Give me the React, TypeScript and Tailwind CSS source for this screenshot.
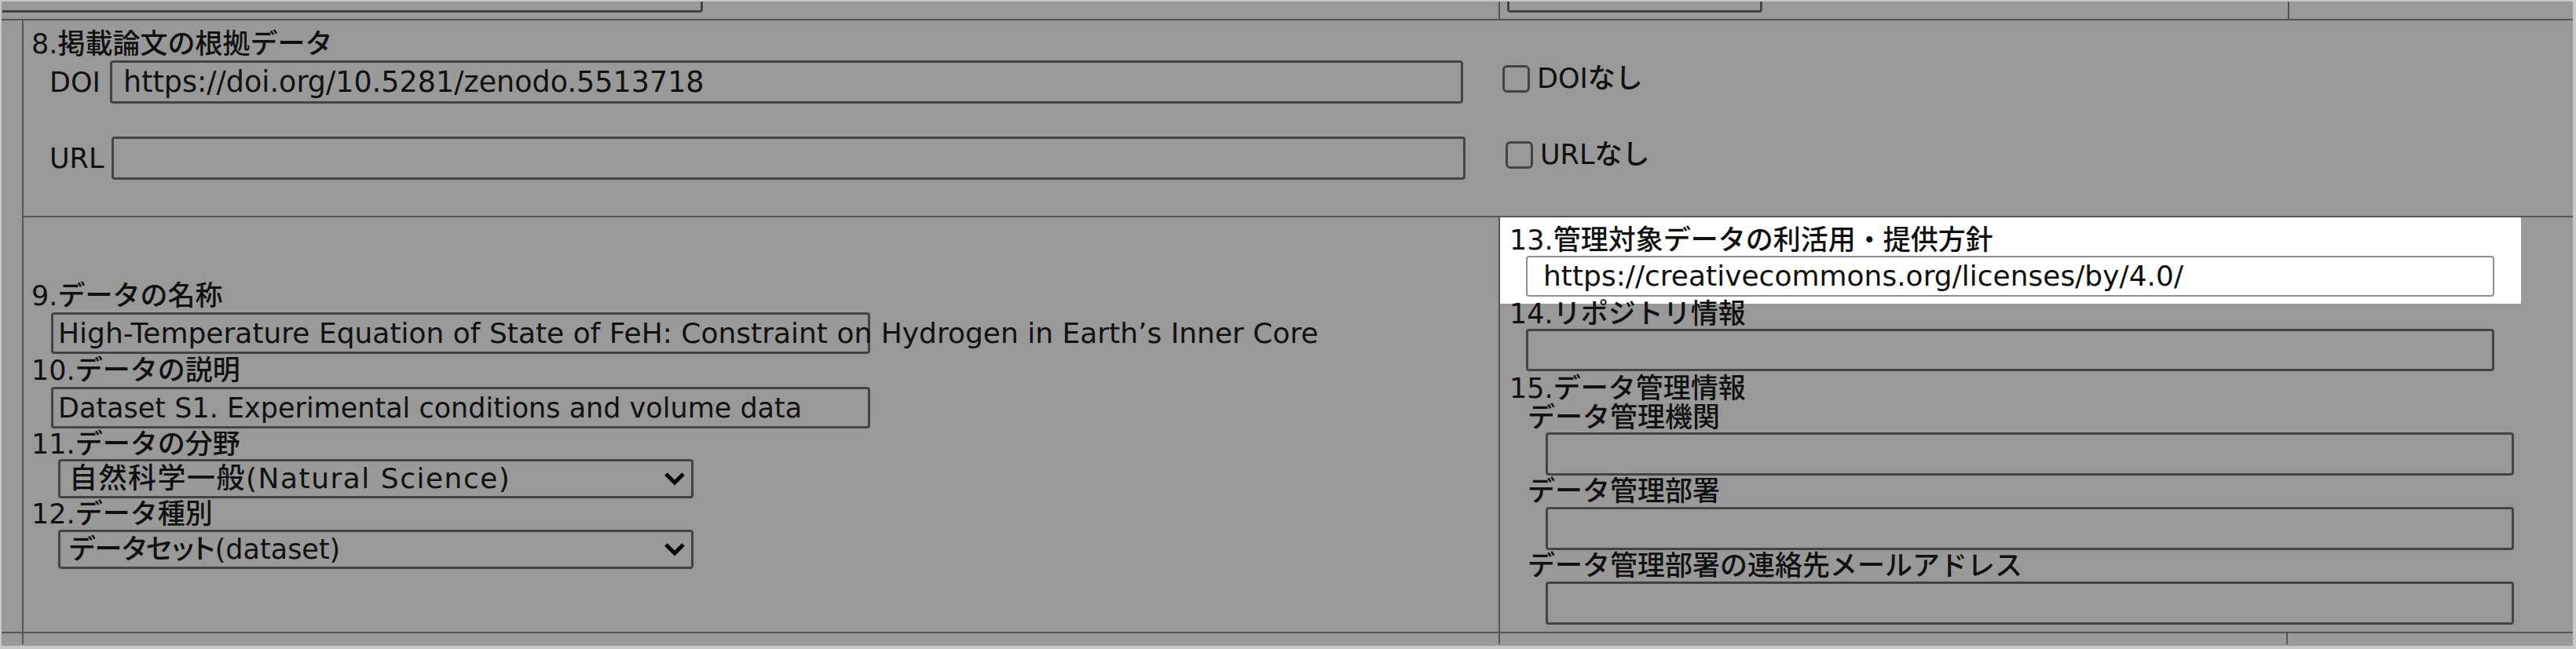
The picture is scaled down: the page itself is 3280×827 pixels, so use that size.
import type { ReactNode } from 'react';

const line = 'border-[#555555]';

function Label({ children, className = '' }: { children: ReactNode; className?: string }) {
  return <div className={`whitespace-nowrap text-[#111] ${className}`}>{children}</div>;
}

function Field({ value, className = '', pad = 'pl-[6px]' }: { value?: string; className?: string; pad?: string }) {
  return (
    <div className={`flex items-center border-[3px] border-[#444] rounded-[4px] ${pad} leading-[40px] whitespace-nowrap text-[#111] ${className}`}>
      {value}
    </div>
  );
}

function Select({ value, textClass = '' }: { value: string; textClass?: string }) {
  return (
    <div className="ml-[44px] w-[809px] h-[50px] flex items-center justify-between border-[3px] border-[#444] rounded-[4px] pl-[11px] pr-[7px] text-[#111] [font-feature-settings:'palt']">
      <span className={`leading-[40px] whitespace-nowrap ${textClass}`}>{value}</span>
      <svg width="28" height="18" viewBox="0 0 28 18" className="shrink-0">
        <polyline points="3,3 14,14 25,3" fill="none" stroke="#000" strokeWidth="5" strokeLinejoin="miter" />
      </svg>
    </div>
  );
}

function Check({ label, className = '' }: { label: string; className?: string }) {
  return (
    <div className={`flex items-center h-[38px] ${className}`}>
      <span className="w-[35px] h-[35px] border-[3px] border-[#444] rounded-[6px]" />
      <span className="ml-[9px] leading-[40px] text-[#111] whitespace-nowrap">{label}</span>
    </div>
  );
}

export default function App() {
  return (
    <div className="w-[3280px] h-[827px] overflow-hidden bg-[#999999] border-t-2 border-l-2 border-r-4 border-b-4 border-[#c8c8c8] text-[35px] font-medium font-['DejaVu_Sans','Noto_Sans_CJK_JP',sans-serif]">
      {/* previous row, cut off at the top */}
      <div className={`flex h-[24px] border-b-2 ${line}`}>
        <div className={`w-[1908px] border-r-2 ${line}`}>
          <div className="ml-[1px] w-[892px] h-[14px] border-r-[3px] border-b-[3px] border-[#444] rounded-br-[4px]" />
        </div>
        <div className={`w-[1005px] border-r-2 ${line}`}>
          <div className="ml-[9px] w-[325px] h-[14px] border-l-[3px] border-r-[3px] border-b-[3px] border-[#444] rounded-b-[4px]" />
        </div>
        <div className="flex-1" />
      </div>

      <div className={`flex h-[781px] border-b-2 ${line}`}>
        <div className={`w-[28px] border-r-2 ${line}`} />
        <div className="flex-1 flex flex-col">
          {/* 8 */}
          <div className={`flex h-[251px] border-b-2 ${line}`}>
            <div className="w-[1880px] pt-[10px]">
              <Label className="pl-[10px] h-[40px] leading-[40px]">8.掲載論文の根拠データ</Label>
              <div className="mt-[1px] flex items-center h-[55px]">
                <Label className="w-[110px] pl-[33px] leading-[40px]">DOI</Label>
                <Field className="w-[1723px] h-[55px] text-[36.5px]" pad="pl-[14px]" value="https://doi.org/10.5281/zenodo.5513718" />
              </div>
              <div className="mt-[42px] flex items-center h-[55px]">
                <Label className="w-[112px] pl-[33px] leading-[40px]">URL</Label>
                <Field className="w-[1724px] h-[55px]" />
              </div>
            </div>
            <div className="flex-1 pt-[55px] pl-[3px]">
              <Check label="DOIなし" />
              <Check label="URLなし" className="mt-[59px] ml-[4px]" />
            </div>
          </div>

          {/* 9 - 15 */}
          <div className="flex h-[528px]">
            <div className={`w-[1880px] border-r-2 ${line} flex flex-col justify-center`}>
              <Label className="pl-[10px] h-[41px] leading-[41px]">9.データの名称</Label>
              <Field
                className="ml-[35px] w-[1043px] h-[53px] overflow-visible text-[36px]"
                value="High-Temperature Equation of State of FeH: Constraint on Hydrogen in Earth’s Inner Core"
              />
              <Label className="pl-[10px] h-[42px] leading-[42px]">10.データの説明</Label>
              <Field className="ml-[35px] w-[1043px] h-[53px]" value="Dataset S1. Experimental conditions and volume data" />
              <Label className="pl-[10px] h-[39px] leading-[40px]">11.データの分野</Label>
              <Select value="自然科学一般(Natural Science)" textClass="text-[36px] tracking-[1.5px]" />
              <Label className="pl-[10px] h-[40px] leading-[40px]">12.データ種別</Label>
              <Select value="データセット(dataset)" />
            </div>

            <div className="flex-1 flex flex-col">
              <div className="w-[1300px] h-[110px] bg-white pt-[9px]">
                <Label className="pl-[12px] h-[40px] leading-[40px]">13.管理対象データの利活用・提供方針</Label>
                <div className="ml-[33px] w-[1233px] h-[52px] flex items-center border-2 border-[#8f8f8f] rounded-[4px] bg-white pl-[20px] leading-[40px] whitespace-nowrap text-[#111] text-[36px]">
                  https://creativecommons.org/licenses/by/4.0/
                </div>
              </div>
              <Label className="pl-[12px] h-[32px] leading-[26px]">14.リポジトリ情報</Label>
              <Field className="ml-[33px] w-[1233px] h-[54px]" />
              <Label className="pl-[12px] h-[40px] leading-[44px]">15.データ管理情報</Label>
              <Label className="pl-[35px] h-[38px] leading-[38px]">データ管理機関</Label>
              <Field className="ml-[58px] w-[1233px] h-[55px]" />
              <Label className="pl-[35px] h-[40px] leading-[40px]">データ管理部署</Label>
              <Field className="ml-[58px] w-[1233px] h-[55px]" />
              <Label className="pl-[35px] h-[40px] leading-[40px]">データ管理部署の連絡先メールアドレス</Label>
              <Field className="ml-[58px] w-[1233px] h-[55px]" />
            </div>
          </div>
        </div>
      </div>

      {/* next row, cut off at the bottom */}
      <div className="flex h-[14px]">
        <div className={`w-[28px] border-r-2 ${line}`} />
        <div className={`w-[1880px] border-r-2 ${line}`} />
        <div className={`w-[1003px] border-r-2 ${line}`} />
        <div className="flex-1" />
      </div>
    </div>
  );
}
